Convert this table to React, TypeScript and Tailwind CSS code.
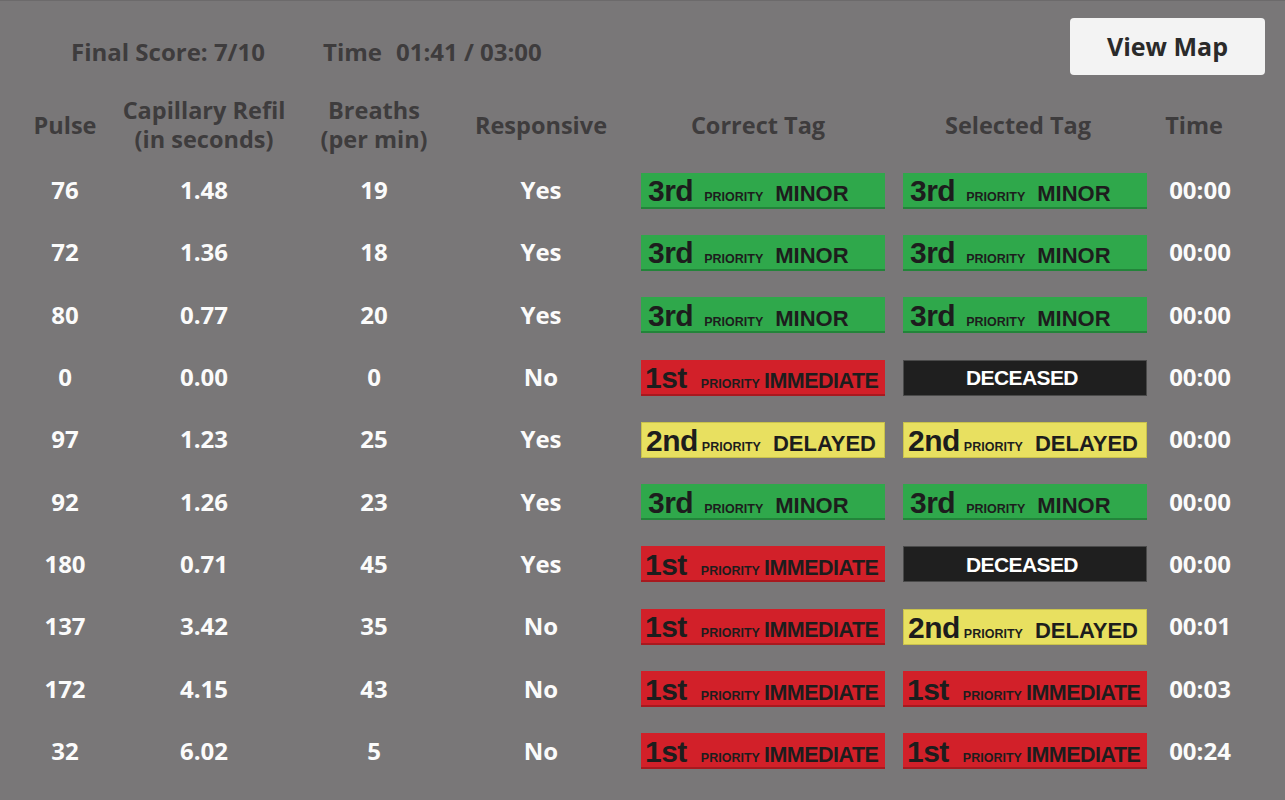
import React from "react";

type TagKind = "minor" | "immediate" | "delayed" | "deceased";

const rows: { pulse: string; cap: string; breaths: string; resp: string; correct: TagKind; selected: TagKind; time: string }[] = [
  { pulse: "76", cap: "1.48", breaths: "19", resp: "Yes", correct: "minor", selected: "minor", time: "00:00" },
  { pulse: "72", cap: "1.36", breaths: "18", resp: "Yes", correct: "minor", selected: "minor", time: "00:00" },
  { pulse: "80", cap: "0.77", breaths: "20", resp: "Yes", correct: "minor", selected: "minor", time: "00:00" },
  { pulse: "0", cap: "0.00", breaths: "0", resp: "No", correct: "immediate", selected: "deceased", time: "00:00" },
  { pulse: "97", cap: "1.23", breaths: "25", resp: "Yes", correct: "delayed", selected: "delayed", time: "00:00" },
  { pulse: "92", cap: "1.26", breaths: "23", resp: "Yes", correct: "minor", selected: "minor", time: "00:00" },
  { pulse: "180", cap: "0.71", breaths: "45", resp: "Yes", correct: "immediate", selected: "deceased", time: "00:00" },
  { pulse: "137", cap: "3.42", breaths: "35", resp: "No", correct: "immediate", selected: "delayed", time: "00:01" },
  { pulse: "172", cap: "4.15", breaths: "43", resp: "No", correct: "immediate", selected: "immediate", time: "00:03" },
  { pulse: "32", cap: "6.02", breaths: "5", resp: "No", correct: "immediate", selected: "immediate", time: "00:24" },
];

function Tag({ kind }: { kind: TagKind }) {
  if (kind === "deceased") {
    return (
      <div className="flex h-[36px] w-[244px] items-center justify-center border border-[#4a4a4a] bg-[#1f1f1f] pr-[6px] font-['Liberation_Sans',Arial,sans-serif] text-[21px] font-bold tracking-[-0.6px] text-white">
        DECEASED
      </div>
    );
  }

  // tag strip: big rank, small "PRIORITY", category word
  if (kind === "minor") {
    return (
      <div className="flex h-[36px] w-[244px] items-center border-b-2 border-[#23843a] bg-[#2fa84b] pl-[7px] font-['Liberation_Sans',Arial,sans-serif] font-bold leading-none text-[#1d1d1d]">
        <div className="flex items-baseline pt-[3px]">
          <span className="text-[30px] tracking-[-0.5px]">3rd</span>
          <span className="ml-[11px] text-[12.5px]">PRIORITY</span>
          <span className="ml-[12px] text-[22px]">MINOR</span>
        </div>
      </div>
    );
  }

  if (kind === "immediate") {
    return (
      <div className="flex h-[36px] w-[244px] items-center border-b-2 border-[#a8191f] bg-[#d22029] pl-[4px] font-['Liberation_Sans',Arial,sans-serif] font-bold leading-none text-[#1d1d1d]">
        <div className="flex items-baseline pt-[3px]">
          <span className="text-[30px] tracking-[-0.5px]">1st</span>
          <span className="ml-[14px] text-[12.5px]">PRIORITY</span>
          <span className="ml-[4px] text-[21.5px] tracking-[-0.5px]">IMMEDIATE</span>
        </div>
      </div>
    );
  }

  return (
    <div className="flex h-[36px] w-[244px] items-center border border-[#c9c24c] bg-[#e8e060] pl-[4px] font-['Liberation_Sans',Arial,sans-serif] font-bold leading-none text-[#1d1d1d]">
      <div className="flex items-baseline pt-[3px]">
        <span className="text-[30px] tracking-[-0.5px]">2nd</span>
        <span className="ml-[4px] text-[12.5px]">PRIORITY</span>
        <span className="ml-[12px] text-[22px]">DELAYED</span>
      </div>
    </div>
  );
}

export default function App() {
  return (
    <div className="h-[800px] w-[1285px] overflow-hidden border-t border-[#6c6a6b] bg-[#797778] font-['Open_Sans','Noto_Sans',sans-serif] font-bold">
      {/* Top bar */}
      <div className="mt-[17px] flex h-[57px] items-center pl-[71px] pr-[20px]">
        <div className="flex items-center pt-[10px] text-[24px] text-[#3e3c3d]">
          <span>Final Score: 7/10</span>
          <span className="ml-[58px]">Time</span>
          <span className="ml-[14px]">01:41 / 03:00</span>
        </div>
        <button className="ml-auto flex h-[57px] w-[195px] items-center justify-center rounded-[4px] bg-[#f3f3f3] text-[25px] text-[#2a2a2a]">
          View Map
        </button>
      </div>

      {/* Column headings */}
      <div className="mt-[21px] flex h-[58px] items-center whitespace-nowrap pl-[11px] text-center text-[23.5px] leading-[29px] text-[#3e3c3d]">
        <div className="w-[108px]">Pulse</div>
        <div className="w-[170px]">
          Capillary Refil
          <br />
          (in seconds)
        </div>
        <div className="w-[170px]">
          Breaths
          <br />
          (per min)
        </div>
        <div className="w-[164px]">Responsive</div>
        <div className="ml-[18px] w-[244px] pr-[10px]">Correct Tag</div>
        <div className="ml-[18px] w-[244px] pr-[14px]">Selected Tag</div>
        <div className="w-[100px] pr-[6px]">Time</div>
      </div>

      {/* Rows */}
      <div className="mt-[5px] flex flex-col">
        {rows.map((r, i) => (
          <div key={i} className="flex h-[62.3px] items-center pl-[11px] text-center text-[24px] text-[#fbfbfb]">
            <div className="w-[108px]">{r.pulse}</div>
            <div className="w-[170px]">{r.cap}</div>
            <div className="w-[170px]">{r.breaths}</div>
            <div className="w-[164px]">{r.resp}</div>
            <div className="ml-[18px] pt-[1px]">
              <Tag kind={r.correct} />
            </div>
            <div className="ml-[18px] pt-[1px]">
              <Tag kind={r.selected} />
            </div>
            <div className="w-[106px]">{r.time}</div>
          </div>
        ))}
      </div>
    </div>
  );
}
